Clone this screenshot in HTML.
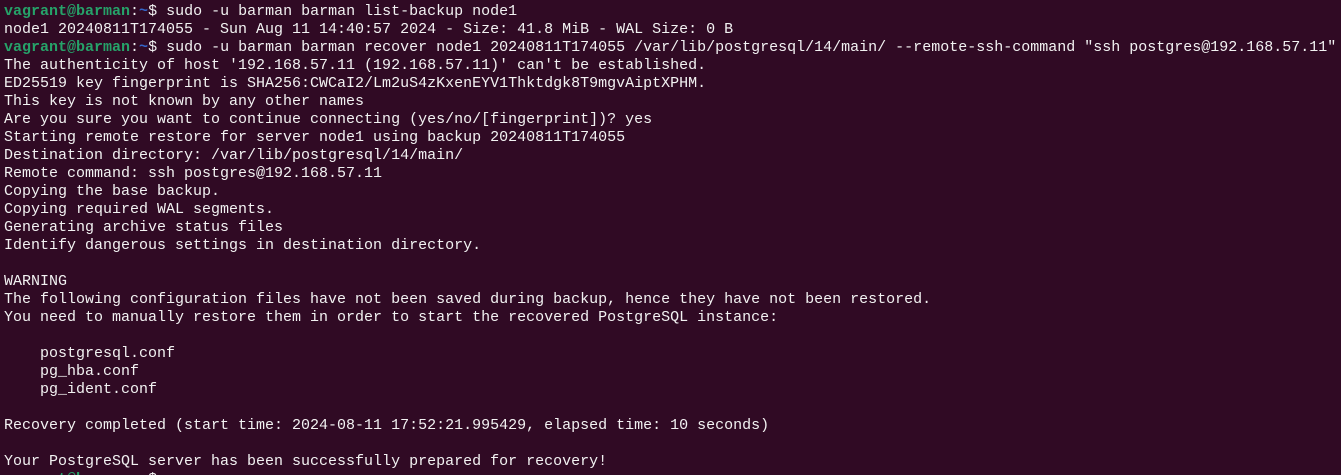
<!DOCTYPE html>
<html><head><meta charset="utf-8"><style>
html,body{margin:0;padding:0;background:#300a24;width:1341px;height:475px;overflow:hidden}
pre{margin:0;padding:3px 0 0 4px;font-family:"Liberation Mono",monospace;font-size:15px;line-height:18px;color:#f2f2f2;white-space:pre}
.g{color:#26a269;font-weight:bold}.b{color:#3465c8;font-weight:bold}
</style></head><body><pre><span class="g">vagrant@barman</span>:<span class="b">~</span>$ sudo -u barman barman list-backup node1
node1 20240811T174055 - Sun Aug 11 14:40:57 2024 - Size: 41.8 MiB - WAL Size: 0 B
<span class="g">vagrant@barman</span>:<span class="b">~</span>$ sudo -u barman barman recover node1 20240811T174055 /var/lib/postgresql/14/main/ --remote-ssh-command "ssh postgres@192.168.57.11"
The authenticity of host '192.168.57.11 (192.168.57.11)' can't be established.
ED25519 key fingerprint is SHA256:CWCaI2/Lm2uS4zKxenEYV1Thktdgk8T9mgvAiptXPHM.
This key is not known by any other names
Are you sure you want to continue connecting (yes/no/[fingerprint])? yes
Starting remote restore for server node1 using backup 20240811T174055
Destination directory: /var/lib/postgresql/14/main/
Remote command: ssh postgres@192.168.57.11
Copying the base backup.
Copying required WAL segments.
Generating archive status files
Identify dangerous settings in destination directory.

WARNING
The following configuration files have not been saved during backup, hence they have not been restored.
You need to manually restore them in order to start the recovered PostgreSQL instance:

    postgresql.conf
    pg_hba.conf
    pg_ident.conf

Recovery completed (start time: 2024-08-11 17:52:21.995429, elapsed time: 10 seconds)

Your PostgreSQL server has been successfully prepared for recovery!
<span class="g">vagrant@barman</span>:<span class="b">~</span>$ </pre></body></html>
